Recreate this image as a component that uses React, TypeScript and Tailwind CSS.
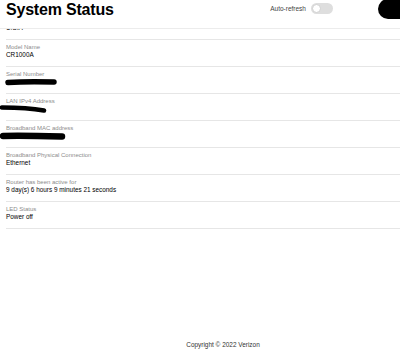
import React from "react";

type Row = {
  label: string;
  value?: string;
  redact?: { w: number; ml: number; d: string; sw: number };
};

const rows: Row[] = [
  { label: "Country", value: "U.S.A" },
  { label: "Model Name", value: "CR1000A" },
  {
    label: "Serial Number",
    redact: { w: 54, ml: -2, d: "M4 4.5 C 18 3.5, 34 3.5, 50 4", sw: 5.5 },
  },
  {
    label: "LAN IPv4 Address",
    redact: { w: 48, ml: -6, d: "M2 2.5 C 14 2.5, 30 3, 44 5.5", sw: 4.5 },
  },
  {
    label: "Broadband MAC address",
    redact: { w: 66, ml: -6, d: "M3 4 C 20 3.5, 42 4, 62 4.5", sw: 6.5 },
  },
  { label: "Broadband Physical Connection", value: "Ethernet" },
  { label: "Router has been active for", value: "9 day(s) 6 hours 9 minutes 21 seconds" },
  { label: "LED Status", value: "Power off" },
];

const StatusRow = ({ row }: { row: Row }) => (
  <div className="h-[27px] border-b border-[#e6e6e6] pt-[4px]">
    <p className="text-[6px] leading-[7px] text-[#8c8c8c]">{row.label}</p>
    {row.redact ? (
      <svg
        width={row.redact.w}
        height={9}
        viewBox={`0 0 ${row.redact.w} 9`}
        style={{ marginLeft: row.redact.ml }}
        className="block"
      >
        <path
          d={row.redact.d}
          stroke="#000"
          strokeWidth={row.redact.sw}
          strokeLinecap="round"
          fill="none"
        />
      </svg>
    ) : (
      <p className="text-[6.4px] leading-[8px] text-black">{row.value}</p>
    )}
  </div>
);

export default function App() {
  return (
    <div className="relative h-[352px] w-[400px] overflow-hidden bg-white font-['Liberation_Sans',Arial,sans-serif]">
      <div className="flex h-full flex-col">
        <div className="pl-[6px] pt-[13px]">
          {rows.map((row) => (
            <StatusRow key={row.label} row={row} />
          ))}
        </div>
        <footer className="mt-auto flex justify-center pb-[3px] pl-[46px]">
          <p className="text-[6.45px] leading-[9px] text-[#333]">Copyright © 2022 Verizon</p>
        </footer>
      </div>

      <header className="absolute inset-x-0 top-0 flex h-[29px] items-start justify-between border-b border-[#ececec] bg-white pl-[6px]">
        <h1 className="text-[16px] font-bold leading-[20px] tracking-[-0.2px] text-black">
          System Status
        </h1>
        <div className="flex items-start">
          <span className="mt-[5px] text-[6.5px] leading-[8px] text-[#444]">Auto-refresh</span>
          <div className="ml-[5px] mt-[3px] flex h-[11px] w-[22px] items-center rounded-full bg-[#dedede] px-[1px]">
            <div className="h-[9px] w-[9px] rounded-full border border-[#d0d0d0] bg-white" />
          </div>
          <div className="-mr-[18px] -mt-[1px] ml-[45px] h-[20px] w-[40px] rounded-full bg-black" />
        </div>
      </header>
    </div>
  );
}
